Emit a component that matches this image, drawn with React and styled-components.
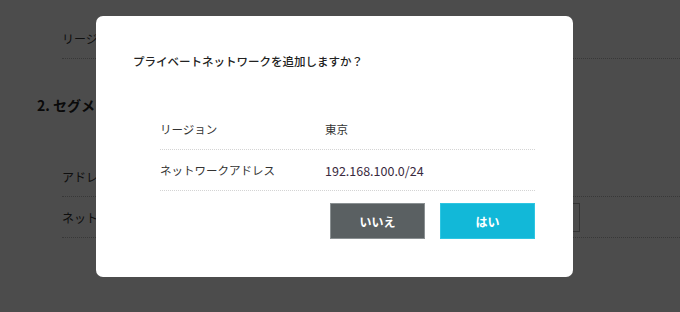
import styled, { createGlobalStyle } from "styled-components";

const Global = createGlobalStyle`
  html, body {
    margin: 0;
    padding: 0;
    background: #ffffff;
    font-family: "Noto Sans CJK JP", "Noto Sans", sans-serif;
    color: #333333;
  }
  * { box-sizing: border-box; }
`;

const Page = styled.div`
  width: 680px;
  height: 312px;
  overflow: hidden;
  padding: 18px 0 0 37px;
`;

const Rows = styled.div`
  margin-left: 25px;
`;

const Row = styled.div`
  display: flex;
  align-items: center;
  justify-content: space-between;
  height: 41px;
  padding-right: 100px;
  border-bottom: 1px dotted #bbbbbb;
  font-size: 12px;
  color: #333;
`;

const Heading = styled.h2`
  margin: 36px 0 41px;
  font-size: 14px;
  font-weight: 700;
  line-height: 20px;
  color: #222;
`;

const TextBox = styled.div`
  width: 240px;
  height: 29px;
  border: 1px solid #aaaaaa;
  background: #fff;
`;

const Overlay = styled.div`
  position: fixed;
  inset: 0;
  background: rgba(0, 0, 0, 0.7);
`;

const Dialog = styled.div`
  width: 477px;
  height: 261px;
  margin: 16px 0 0 96px;
  padding: 36px 38px 37px 37px;
  background: #ffffff;
  border-radius: 7px;
`;

const Title = styled.p`
  margin: 0 0 39px;
  font-size: 11.5px;
  line-height: 18px;
  font-weight: 500;
  color: #222;
`;

const Table = styled.div`
  margin-left: 27px;
`;

const TableRow = styled.div`
  display: grid;
  grid-template-columns: 165px 1fr;
  align-items: center;
  height: 41px;
  border-bottom: 1px dotted #d4d4d4;
  font-size: 11.5px;
  color: #333;
`;

const Value = styled.span`
  color: ${(p) => (p.mono ? "#3a2a40" : "#333")};
  font-size: ${(p) => (p.mono ? "12.5px" : "11.5px")};
`;

const Actions = styled.div`
  display: flex;
  justify-content: flex-end;
  gap: 15px;
  margin-top: 12px;
`;

const Button = styled.button`
  width: 95px;
  height: 36px;
  border: 1px solid ${(p) => (p.primary ? "#2ec6e2" : "#8a9092")};
  background: ${(p) => (p.primary ? "#12b8d8" : "#5a6062")};
  color: #ffffff;
  font-family: inherit;
  font-size: 12px;
  font-weight: 700;
  cursor: pointer;
`;

function App() {
  return (
    <>
      <Global />
      <Page>
        <Rows>
          <Row>リージョン</Row>
        </Rows>
        <Heading>2. セグメント</Heading>
        <Rows>
          <Row>アドレス範囲</Row>
          <Row>
            ネットワーク
            <TextBox />
          </Row>
        </Rows>
      </Page>
      <Overlay>
        <Dialog>
          <Title>プライベートネットワークを追加しますか？</Title>
          <Table>
            <TableRow>
              <span>リージョン</span>
              <Value>東京</Value>
            </TableRow>
            <TableRow>
              <span>ネットワークアドレス</span>
              <Value mono>192.168.100.0/24</Value>
            </TableRow>
          </Table>
          <Actions>
            <Button>いいえ</Button>
            <Button primary>はい</Button>
          </Actions>
        </Dialog>
      </Overlay>
    </>
  );
}

export default App;
